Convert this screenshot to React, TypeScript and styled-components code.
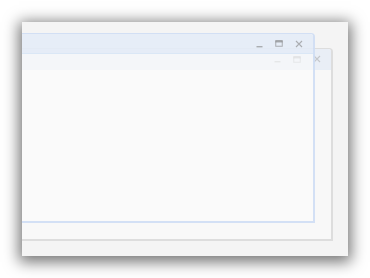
import React from "react";
import styled, { createGlobalStyle } from "styled-components";

const Global = createGlobalStyle`
  html, body { margin: 0; padding: 0; background: #ffffff; }
  body { font-family: "Liberation Sans", Arial, sans-serif; }
`;

const Page = styled.div`
  width: 370px;
  height: 278px;
  padding: 22px 0 0 22px;
  box-sizing: border-box;
`;

const Desktop = styled.div`
  position: relative;
  width: 326px;
  height: 234px;
  background: #f4f4f4;
  overflow: hidden;
  box-shadow: 0 3px 14px 3px rgba(0, 0, 0, 0.55);
`;

const Win = styled.div<{ $top: number; $width: number; $height: number; $front?: boolean }>`
  position: absolute;
  left: -20px;
  top: ${(p) => p.$top}px;
  width: ${(p) => p.$width}px;
  height: ${(p) => p.$height}px;
  box-sizing: border-box;
  display: flex;
  flex-direction: column;
  border-radius: 4px 4px 0 0;
  border: 2px solid ${(p) => (p.$front ? "rgba(196, 214, 242, 0.75)" : "rgba(214, 214, 214, 0.8)")};
  border-top-width: 1px;
  background: ${(p) => (p.$front ? "rgba(251, 251, 251, 0.6)" : "#f8f8f8")};
`;

const TitleBar = styled.div<{ $height: number; $front?: boolean }>`
  height: ${(p) => p.$height}px;
  flex: none;
  display: flex;
  align-items: center;
  justify-content: flex-end;
  gap: 5.5px;
  padding-right: 7.5px;
  background: ${(p) => (p.$front ? "rgba(222, 232, 246, 0.7)" : "rgba(228, 235, 245, 0.75)")};
  border-radius: 3px 3px 0 0;
  border-bottom: 1px solid ${(p) => (p.$front ? "rgba(214, 226, 243, 0.7)" : "rgba(230, 236, 244, 0.6)")};
`;

const Control = styled.span<{ $color: string }>`
  width: 14px;
  height: 10px;
  display: flex;
  align-items: center;
  justify-content: center;
  color: ${(p) => p.$color};
`;

const Body = styled.div`
  flex: 1;
`;

function Controls({ color }: { color: string }) {
  return (
    <>
      <Control $color={color}>
        <svg width="7" height="8" viewBox="0 0 7 8">
          <rect x="0.5" y="6" width="6" height="1.4" fill="currentColor" />
        </svg>
      </Control>
      <Control $color={color}>
        <svg width="8" height="7" viewBox="0 0 8 7">
          <rect x="0.75" y="0.75" width="6.5" height="5.5" fill="none" stroke="currentColor" strokeWidth="1" />
          <rect x="0.5" y="0.5" width="7" height="2" fill="currentColor" />
        </svg>
      </Control>
      <Control $color={color}>
        <svg width="8" height="8" viewBox="0 0 8 8">
          <path d="M1 1 L7 7 M7 1 L1 7" stroke="currentColor" strokeWidth="1.1" fill="none" />
        </svg>
      </Control>
    </>
  );
}

export default function App() {
  return (
    <>
      <Global />
      <Page>
        <Desktop>
          <Win $top={26} $width={331} $height={193}>
            <TitleBar $height={20}>
              <Controls color="rgba(150,150,150,0.45)" />
            </TitleBar>
            <Body />
          </Win>
          <Win $top={11} $width={313} $height={190} $front>
            <TitleBar $height={19} $front>
              <Controls color="rgba(120,120,120,0.55)" />
            </TitleBar>
            <Body />
          </Win>
        </Desktop>
      </Page>
    </>
  );
}
